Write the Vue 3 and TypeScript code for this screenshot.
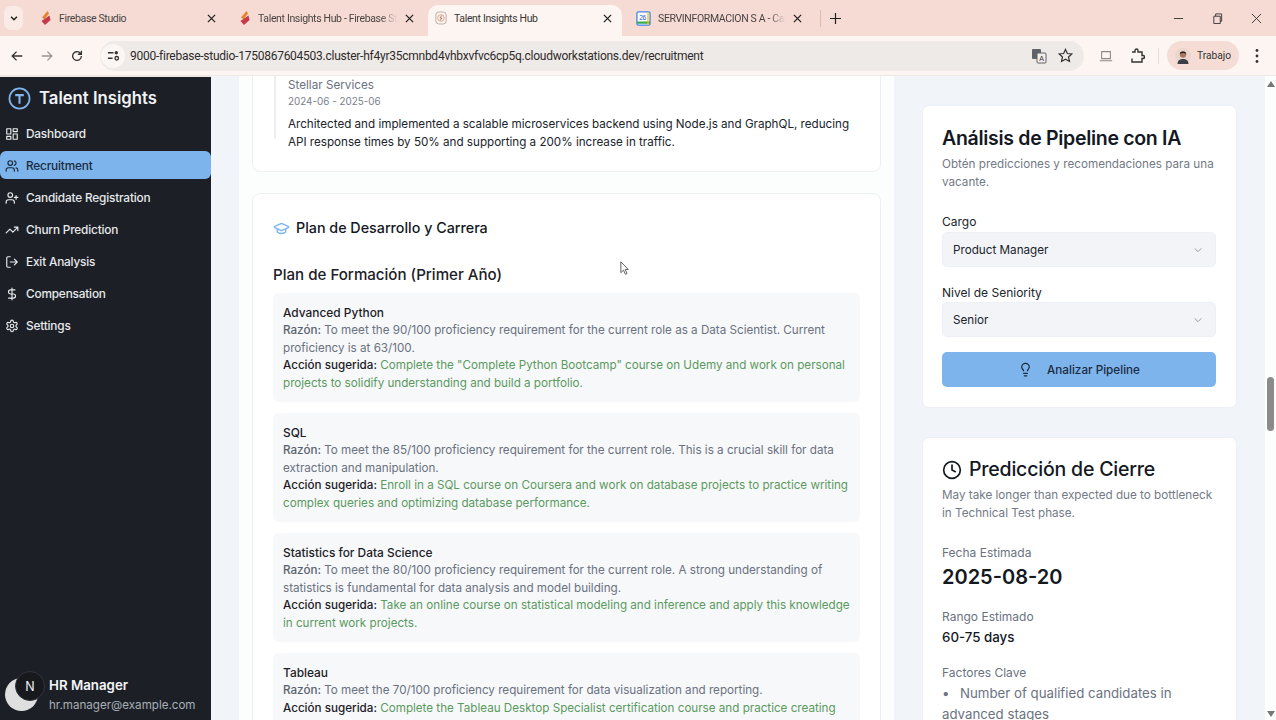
<script setup lang="ts">
interface NavItem { label: string; icon: string; active?: boolean }
interface Tab { title: string; kind: 'firebase' | 'hub' | 'cal'; active?: boolean; fade?: boolean }
interface Course { name: string; reason: string; action: string }

const tabs: Tab[] = [
  { title: 'Firebase Studio', kind: 'firebase' },
  { title: 'Talent Insights Hub - Firebase Studio', kind: 'firebase', fade: true },
  { title: 'Talent Insights Hub', kind: 'hub', active: true },
  { title: 'SERVINFORMACION S A - Calendar', kind: 'cal', fade: true },
]

const nav: NavItem[] = [
  { label: 'Dashboard', icon: 'M3 3h7v9H3zM14 3h7v5h-7zM14 12h7v9h-7zM3 16h7v5H3z' },
  { label: 'Recruitment', active: true, icon: 'M16 21v-2a4 4 0 0 0-4-4H6a4 4 0 0 0-4 4v2M13 7a4 4 0 1 1-8 0 4 4 0 0 1 8 0M22 21v-2a4 4 0 0 0-3-3.87M16 3.13a4 4 0 0 1 0 7.75' },
  { label: 'Candidate Registration', icon: 'M16 21v-2a4 4 0 0 0-4-4H6a4 4 0 0 0-4 4v2M13 7a4 4 0 1 1-8 0 4 4 0 0 1 8 0M19 8v6M22 11h-6' },
  { label: 'Churn Prediction', icon: 'M22 7l-8.5 8.5-5-5L2 17M16 7h6v6' },
  { label: 'Exit Analysis', icon: 'M9 21H5a2 2 0 0 1-2-2V5a2 2 0 0 1 2-2h4M16 17l5-5-5-5M21 12H9' },
  { label: 'Compensation', icon: 'M12 2v20M17 5H9.5a3.5 3.5 0 0 0 0 7h5a3.5 3.5 0 0 1 0 7H6' },
  { label: 'Settings', icon: 'M12.2 2h-.4a2 2 0 0 0-2 2v.2a2 2 0 0 1-1 1.7l-.4.3a2 2 0 0 1-2 0l-.2-.1a2 2 0 0 0-2.7.7l-.2.4a2 2 0 0 0 .7 2.7l.2.1a2 2 0 0 1 1 1.7v.5a2 2 0 0 1-1 1.7l-.2.1a2 2 0 0 0-.7 2.7l.2.4a2 2 0 0 0 2.7.7l.2-.1a2 2 0 0 1 2 0l.4.3a2 2 0 0 1 1 1.7v.2a2 2 0 0 0 2 2h.4a2 2 0 0 0 2-2v-.2a2 2 0 0 1 1-1.7l.4-.3a2 2 0 0 1 2 0l.2.1a2 2 0 0 0 2.7-.7l.2-.4a2 2 0 0 0-.7-2.7l-.2-.1a2 2 0 0 1-1-1.7v-.5a2 2 0 0 1 1-1.7l.2-.1a2 2 0 0 0 .7-2.7l-.2-.4a2 2 0 0 0-2.7-.7l-.2.1a2 2 0 0 1-2 0l-.4-.3a2 2 0 0 1-1-1.7V4a2 2 0 0 0-2-2zM15 12a3 3 0 1 1-6 0 3 3 0 0 1 6 0' },
]

const courses: Course[] = [
  {
    name: 'Advanced Python',
    reason: 'To meet the 90/100 proficiency requirement for the current role as a Data Scientist. Current proficiency is at 63/100.',
    action: 'Complete the "Complete Python Bootcamp" course on Udemy and work on personal projects to solidify understanding and build a portfolio.',
  },
  {
    name: 'SQL',
    reason: 'To meet the 85/100 proficiency requirement for the current role. This is a crucial skill for data extraction and manipulation.',
    action: 'Enroll in a SQL course on Coursera and work on database projects to practice writing complex queries and optimizing database performance.',
  },
  {
    name: 'Statistics for Data Science',
    reason: 'To meet the 80/100 proficiency requirement for the current role. A strong understanding of statistics is fundamental for data analysis and model building.',
    action: 'Take an online course on statistical modeling and inference and apply this knowledge in current work projects.',
  },
  {
    name: 'Tableau',
    reason: 'To meet the 70/100 proficiency requirement for data visualization and reporting.',
    action: 'Complete the Tableau Desktop Specialist certification course and practice creating',
  },
]
</script>

<template>
  <div class="window">
    <header class="tabstrip">
      <button class="tab-menu">
        <svg viewBox="0 0 12 12" width="10" height="10"><path d="M2.5 4.5 6 8l3.5-3.5" fill="none" stroke="#1f1f1f" stroke-width="1.8" /></svg>
      </button>
      <div
        v-for="tab in tabs"
        :key="tab.title"
        :class="['tab', { 'is-active': tab.active }]"
      >
        <svg v-if="tab.kind === 'firebase'" class="favicon" viewBox="0 0 12 16">
          <path d="M7.500 1 2 7.500l2.500 1.700L9 3.500z" fill="#e8832d" />
          <path d="M9.500 5.500 1.500 11l3.500 4 5.500-5z" fill="#c43a48" />
        </svg>
        <svg v-else-if="tab.kind === 'hub'" class="favicon" viewBox="0 0 14 16">
          <rect x="1" y="1" width="12" height="14" rx="3.500" fill="#fbf3ef" stroke="#b8a49b" />
          <circle cx="7" cy="8" r="3.800" fill="none" stroke="#d39a84" stroke-width=".9" />
          <path d="M8 5 5.800 8h2.400L6 11" fill="none" stroke="#c46a4c" stroke-width="1" />
        </svg>
        <svg v-else class="favicon" viewBox="0 0 16 16">
          <rect x="1" y="1" width="14" height="14" rx="1.500" fill="#fff" stroke="#4285f4" stroke-width="1.400" />
          <path d="M1 12.400h14" stroke="#34a853" stroke-width="2.400" />
          <path d="M12.800 1v14" stroke="#fbbc04" stroke-width="1.400" />
          <text x="7" y="10" font-size="7" text-anchor="middle" fill="#1a56c4" font-family="Liberation Sans, sans-serif">26</text>
        </svg>
        <span :class="['tab-title', { 'is-fade': tab.fade }]">{{ tab.title }}</span>
        <svg class="tab-close" viewBox="0 0 10 10" width="9" height="9"><path d="M1 1l8 8M9 1 1 9" stroke="#1f1f1f" stroke-width="1.400" /></svg>
      </div>
      <span class="tab-sep"></span>
      <svg class="tab-plus" viewBox="0 0 12 12" width="11" height="11"><path d="M6 0v12M0 6h12" stroke="#1f1f1f" stroke-width="1.300" /></svg>
      <div class="window-btns">
        <svg viewBox="0 0 12 12" width="11" height="11"><path d="M1 6h10" stroke="#333" stroke-width="1" /></svg>
        <svg viewBox="0 0 12 12" width="11" height="11"><path d="M2 3.500h7v8H2zM4 3.500V1h6.500v8H9" fill="none" stroke="#333" stroke-width="1" /></svg>
        <svg viewBox="0 0 12 12" width="11" height="11"><path d="M1 1l10 10M11 1 1 11" stroke="#333" stroke-width="1" /></svg>
      </div>
    </header>

    <div class="toolbar">
      <svg class="tool" viewBox="0 0 16 16" width="14" height="14"><path d="M14 8H2.500M7.500 3 2.500 8l5 5" fill="none" stroke="#333" stroke-width="1.500" /></svg>
      <svg class="tool" viewBox="0 0 16 16" width="14" height="14"><path d="M2 8h11.500M8.500 3l5 5-5 5" fill="none" stroke="#9a9492" stroke-width="1.500" /></svg>
      <svg class="tool" viewBox="0 0 16 16" width="14" height="14"><path d="M13 8a5 5 0 1 1-1.500-3.500L13 6M13 2v4H9" fill="none" stroke="#333" stroke-width="1.500" /></svg>
      <div class="omnibox">
        <span class="site-chip">
          <svg viewBox="0 0 14 14" width="13" height="13"><path d="M1 4h6M1 10h5" stroke="#333" stroke-width="1.500" /><circle cx="10" cy="4" r="1.800" fill="#333" /><circle cx="10.500" cy="10" r="1.900" fill="none" stroke="#333" stroke-width="1.400" /></svg>
        </span>
        <span class="url">9000-firebase-studio-1750867604503.cluster-hf4yr35cmnbd4vhbxvfvc6cp5q.cloudworkstations.dev/recruitment</span>
        <svg class="omni-icon" viewBox="0 0 16 16" width="16" height="16">
          <rect x="1" y="1" width="9" height="10" rx="1" fill="#5f6368" />
          <rect x="6" y="5" width="9" height="10" rx="1" fill="#f2eeec" stroke="#5f6368" />
          <text x="10.500" y="13" font-size="7" text-anchor="middle" fill="#333" font-family="Liberation Sans, sans-serif">A</text>
        </svg>
        <svg class="omni-icon" viewBox="0 0 16 16" width="15" height="15"><path d="M8 1.500l2 4.400 4.700.5-3.500 3.200 1 4.700L8 11.900l-4.200 2.400 1-4.700L1.300 6.400 6 5.900z" fill="none" stroke="#333" stroke-width="1.300" /></svg>
      </div>
      <svg class="tool-right" viewBox="0 0 16 16" width="14" height="14"><path d="M3 3h10v8H3zM1 13.500h14" fill="none" stroke="#8a8684" stroke-width="1.200" /></svg>
      <svg class="tool-right" viewBox="0 0 16 16" width="16" height="16"><path d="M3 4h3V2.500a1.500 1.500 0 0 1 3 0V4h4v3.500h1a1.500 1.500 0 0 1 0 3h-1V14H3v-3.500" fill="none" stroke="#333" stroke-width="1.400" /></svg>
      <span class="tool-sep"></span>
      <div class="profile">
        <svg viewBox="0 0 16 16" width="16" height="16">
          <circle cx="8" cy="8" r="8" fill="#e9d6cf" />
          <path d="M2.500 16c0-3.600 2.400-5 5.500-5s5.500 1.400 5.500 5z" fill="#3a3f44" />
          <circle cx="8" cy="6.500" r="3.200" fill="#a8795f" />
          <path d="M4.800 6C5 2.800 11 2.800 11.200 6 9 4.600 7 4.600 4.800 6" fill="#26211f" />
        </svg>
        <span>Trabajo</span>
      </div>
      <svg class="dots" viewBox="0 0 4 16" width="4" height="16"><circle cx="2" cy="2.500" r="1.400" fill="#333" /><circle cx="2" cy="8" r="1.400" fill="#333" /><circle cx="2" cy="13.500" r="1.400" fill="#333" /></svg>
    </div>

    <div class="app">
      <aside class="sidebar">
        <div class="brand">
          <svg viewBox="0 0 24 24" width="23" height="23" fill="none" stroke="#7fb5ec" stroke-width="1.800">
            <circle cx="12" cy="12" r="10.500" />
            <path d="M7.500 8.500h9M12 8.500v9" stroke-width="2.200" />
          </svg>
          <span>Talent Insights</span>
        </div>
        <nav class="nav">
          <a v-for="item in nav" :key="item.label" :class="['nav-item', { 'is-active': item.active }]">
            <svg viewBox="0 0 24 24" width="14" height="14" fill="none" stroke="currentColor" stroke-width="2" stroke-linecap="round" stroke-linejoin="round">
              <path :d="item.icon" />
            </svg>
            <span>{{ item.label }}</span>
          </a>
        </nav>
        <div class="user">
          <div class="avatar">
            <span class="moon"></span>
            <span class="n-badge">N</span>
          </div>
          <div class="user-text">
            <strong>HR Manager</strong>
            <small>hr.manager@example.com</small>
          </div>
        </div>
      </aside>

      <main class="content">
        <div class="gutter"></div>
        <section class="center">
          <div class="card card-exp">
            <div class="exp">
              <div class="exp-company">Stellar Services</div>
              <div class="exp-dates">2024-06 - 2025-06</div>
              <p>Architected and implemented a scalable microservices backend using Node.js and GraphQL, reducing API response times by 50% and supporting a 200% increase in traffic.</p>
            </div>
          </div>

          <div class="card card-plan">
            <h3 class="plan-title">
              <svg viewBox="0 0 24 24" width="17" height="17" fill="none" stroke="#7fb5ec" stroke-width="2" stroke-linecap="round" stroke-linejoin="round">
                <path d="M21.400 10.900a1 1 0 0 0 0-1.800L12.800 5.200a2 2 0 0 0-1.700 0L2.600 9.100a1 1 0 0 0 0 1.800l8.500 3.900a2 2 0 0 0 1.700 0zM6 12.500V16c0 1.700 2.700 3 6 3s6-1.300 6-3v-3.500" />
              </svg>
              Plan de Desarrollo y Carrera
            </h3>
            <h4 class="plan-sub">Plan de Formación (Primer Año)</h4>
            <div class="courses">
              <article v-for="course in courses" :key="course.name" class="course">
                <div class="course-name">{{ course.name }}</div>
                <p class="course-reason"><b>Razón:</b> {{ course.reason }}</p>
                <p class="course-action"><b>Acción sugerida:</b> <span>{{ course.action }}</span></p>
              </article>
            </div>
          </div>
          <svg class="cursor" viewBox="0 0 12 18" width="10" height="15"><path d="M1 1v13l3.200-3 2.300 5 2-1-2.300-4.800H10z" fill="#fff" stroke="#444" stroke-width="1" /></svg>
        </section>

        <aside class="side">
          <div class="panel panel-ia">
            <h2>Análisis de Pipeline con IA</h2>
            <p class="panel-desc">Obtén predicciones y recomendaciones para una vacante.</p>
            <label class="field-label">Cargo</label>
            <div class="select">
              <span>Product Manager</span>
              <svg viewBox="0 0 12 12" width="10" height="10"><path d="M2 4l4 4 4-4" fill="none" stroke="#8b9099" stroke-width="1.100" /></svg>
            </div>
            <label class="field-label second">Nivel de Seniority</label>
            <div class="select select-second">
              <span>Senior</span>
              <svg viewBox="0 0 12 12" width="10" height="10"><path d="M2 4l4 4 4-4" fill="none" stroke="#8b9099" stroke-width="1.100" /></svg>
            </div>
            <button class="analyze">
              <svg viewBox="0 0 24 24" width="15" height="15" fill="none" stroke="#1b2a3d" stroke-width="2" stroke-linecap="round" stroke-linejoin="round">
                <path d="M15 14c.2-1 .7-1.700 1.500-2.500A5.900 5.900 0 0 0 18 8 6 6 0 0 0 6 8c0 1 .2 2.200 1.500 3.500.7.700 1.300 1.500 1.500 2.500M9 18h6M10 22h4" />
              </svg>
              Analizar Pipeline
            </button>
          </div>

          <div class="panel panel-close">
            <h2 class="with-icon">
              <svg viewBox="0 0 24 24" width="20" height="20" fill="none" stroke="#14181f" stroke-width="2" stroke-linecap="round" stroke-linejoin="round">
                <circle cx="12" cy="12" r="10" /><path d="M12 6v6l4 2" />
              </svg>
              Predicción de Cierre
            </h2>
            <p class="panel-desc">May take longer than expected due to bottleneck in Technical Test phase.</p>
            <div class="stat-label first">Fecha Estimada</div>
            <div class="stat-date">2025-08-20</div>
            <div class="stat-label">Rango Estimado</div>
            <div class="stat-range">60-75 days</div>
            <div class="stat-label third">Factores Clave</div>
            <p class="factor"><span class="bullet">•</span>Number of qualified candidates in advanced stages</p>
          </div>
        </aside>

        <div class="scrollbar">
          <svg viewBox="0 0 8 6" width="8" height="6"><path d="M4 0l4 6H0z" fill="#777" /></svg>
          <span class="thumb"></span>
          <svg viewBox="0 0 8 6" width="8" height="6"><path d="M0 0h8L4 6z" fill="#777" /></svg>
        </div>
      </main>
    </div>
  </div>
</template>

<style>
html, body { margin: 0; overflow: hidden; }
</style>

<style scoped>
.window { width: 1276px; height: 720px; display: flex; flex-direction: column; overflow: hidden; font-family: Inter, "Liberation Sans", sans-serif; color: #14181f; }

.tabstrip { flex: 0 0 36px; display: flex; align-items: center; background: #f6dbd4; font-family: Roboto, "Liberation Sans", sans-serif; }
.tab-menu { width: 19px; height: 24px; margin: 0 5px 0 4px; padding: 0; border: 0; border-radius: 7px; background: #faebe6; display: flex; align-items: center; justify-content: center; flex: none; }
.tab { width: 200px; height: 36px; flex: none; display: flex; align-items: center; box-sizing: border-box; padding: 0 12px 0 12px; font-size: 10.500px; letter-spacing: -0.35px; color: #4a4442; }
.tab:nth-of-type(2) { padding: 0 14px 0 11px; }
.tab.is-active { width: 194px; height: 31px; align-self: flex-end; background: #fcf5f2; border-radius: 10px 10px 0 0; color: #3a3534; padding: 0 10px 5px 7px; }
.tab:nth-of-type(4) { width: 198px; padding-left: 14px; padding-right: 18px; }
.favicon { width: 12px; height: 16px; flex: none; margin-right: 7px; }
.tab:nth-of-type(4) .favicon { width: 15px; height: 15px; }
.tab-title { flex: 1; min-width: 0; white-space: nowrap; overflow: hidden; }
.tab-title.is-fade { -webkit-mask-image: linear-gradient(90deg, #000 88%, transparent 100%); mask-image: linear-gradient(90deg, #000 88%, transparent 100%); }
.tab-close { flex: none; margin-left: 8px; }
.tab-sep { width: 1px; height: 17px; background: #dfb9af; margin: 0 9px 0 0; flex: none; }
.tab-plus { flex: none; }
.window-btns { margin-left: auto; margin-right: 14px; display: flex; gap: 28px; }

.toolbar { flex: 0 0 40px; box-sizing: border-box; display: flex; align-items: center; background: #fcf5f2; padding: 0 0 0 10px; border-bottom: 1px solid #efe9e6; }
.tool { margin-right: 16px; flex: none; }
.omnibox { width: 984px; flex: none; height: 30px; margin-right: 15px; background: #eeeae8; border-radius: 15px; display: flex; align-items: center; font-family: Roboto, "Liberation Sans", sans-serif; font-size: 12px; letter-spacing: -0.25px; color: #2e2b2a; }
.site-chip { width: 24px; height: 24px; margin: 0 5px 0 1px; border-radius: 50%; background: #fbf6f3; display: flex; align-items: center; justify-content: center; flex: none; }
.url { flex: 1; white-space: nowrap; overflow: hidden; }
.omni-icon { flex: none; margin-right: 11px; }
.tool-right { flex: none; margin-right: 16px; }
.tool-sep { width: 1px; height: 16px; background: #ecdcd6; margin: 0 8px 0 -3px; flex: none; }
.profile { width: 72px; height: 29px; box-sizing: border-box; border-radius: 15px; background: #f5ddd6; display: flex; align-items: center; gap: 6px; padding-left: 8px; font-family: Roboto, "Liberation Sans", sans-serif; font-size: 10.200px; color: #333; flex: none; }
.dots { margin-left: 16px; flex: none; }

.app { flex: 1; min-height: 0; display: flex; }
.sidebar { flex: 0 0 211px; box-sizing: border-box; border-top: 1px solid #efe9e6; background: #1c2026; color: #f2f4f7; display: flex; flex-direction: column; }
.brand { display: flex; align-items: center; gap: 8px; height: 43px; box-sizing: border-box; padding: 0 0 1px 8px; font-size: 16.700px; font-weight: 600; flex: none; }
.nav { display: flex; flex-direction: column; margin-top: -1px; }
.nav-item { display: flex; align-items: center; gap: 7px; height: 28px; box-sizing: border-box; margin-bottom: 4px; padding: 1px 0 0 5px; font-size: 11.800px; letter-spacing: -0.17px; font-weight: 500; color: #e7e9ec; border-radius: 6px; }
.nav-item.is-active { background: #7db4ec; color: #1b2a3d; }
.user { margin-top: auto; height: 51px; display: flex; align-items: center; padding-left: 5px; gap: 3px; box-sizing: border-box; }
.avatar { position: relative; width: 41px; height: 41px; flex: none; margin-top: -6px; }
.moon { position: absolute; left: 0; top: 7px; width: 33px; height: 33px; border-radius: 50%; background: #dfdfdf; }
.n-badge { position: absolute; left: 10px; top: 0; width: 30px; height: 30px; box-sizing: border-box; border: 1px solid #30343a; border-radius: 50%; background: #17191d; color: #f2f2f2; font-size: 12.500px; display: flex; align-items: center; justify-content: center; }
.user-text { display: flex; flex-direction: column; gap: 3px; }
.user-text strong { font-size: 13.300px; font-weight: 600; color: #f5f6f8; line-height: 17px; }
.user-text small { font-size: 11.600px; color: #a9afb8; line-height: 16px; }

.content { flex: 1; min-width: 0; display: flex; background: #f1f5f9; overflow: hidden; }
.gutter { flex: 0 0 28px; }
.center { flex: 0 0 655px; box-sizing: border-box; background: #fcfdfd; padding: 0 13px; position: relative; }
.card { background: #fff; border: 1px solid #eeeff2; border-radius: 8px; box-sizing: border-box; width: 629px; }
.card-exp { height: 96px; border-top: 0; border-radius: 0 0 8px 8px; padding: 0 20px 0 21px; }
.exp { border-left: 2px solid #eceef1; padding-left: 12px; height: 63px; }
.exp-company { font-size: 11.700px; line-height: 18px; color: #6a7280; }
.exp-dates { font-size: 9.900px; line-height: 14px; color: #7a818c; }
.exp p { margin: 7px 0 0; font-size: 11.650px; line-height: 18px; color: #20242b; }
.card-plan { margin-top: 21px; padding: 24px 20px 0; height: 540px; overflow: hidden; }
.plan-title { display: flex; align-items: center; gap: 6px; margin: 0; font-size: 14.300px; line-height: 20px; font-weight: 500; color: #14181f; }
.plan-sub { margin: 27px 0 0; font-size: 15.100px; line-height: 20px; font-weight: 500; color: #1c2027; }
.courses { margin-top: 8px; display: flex; flex-direction: column; gap: 11px; }
.course { background: #f7f8fa; border-radius: 6px; padding: 11px 10px 0; height: 109px; box-sizing: border-box; font-size: 11.650px; line-height: 17.750px; }
.course-name { font-size: 11.900px; font-weight: 500; color: #1c2027; }
.course p { margin: 0; }
.course-reason { color: #6a7280; }
.course-reason b { font-weight: 500; color: #5a616d; }
.course-action b { font-weight: 500; color: #1c2027; }
.course-action span { color: #5b9a5f; }
.cursor { position: absolute; left: 381px; top: 185px; }

.side { flex: 0 0 370px; box-sizing: border-box; padding: 29px 28px 0; display: flex; flex-direction: column; gap: 29px; }
.panel { width: 315px; box-sizing: border-box; background: #fff; border: 1px solid #eceff3; border-radius: 7px; padding: 20px 20px 0 19px; flex: none; }
.panel-ia { height: 303px; }
.panel h2 { margin: 0; font-size: 19.500px; line-height: 25px; font-weight: 600; color: #14181f; letter-spacing: -0.3px; }
.panel h2.with-icon { display: flex; align-items: center; gap: 7px; font-weight: 500; letter-spacing: -0.2px; }
.panel-desc { margin: 4px 0 0; font-size: 11.700px; line-height: 18px; color: #737a86; }
.field-label { display: block; margin-top: 23px; font-size: 12px; line-height: 15px; color: #20242b; }
.field-label.second { margin-top: 18px; }
.select { margin-top: 3px; height: 35px; box-sizing: border-box; padding: 0 12px 0 10px; background: #f2f4f8; border: 1px solid #edf0f4; border-radius: 5px; display: flex; align-items: center; justify-content: space-between; font-size: 11.700px; color: #20242b; }
.select-second { margin-top: 2px; }
.analyze { margin-top: 15px; width: 100%; height: 35px; border: 0; border-radius: 5px; background: #7db4ec; display: flex; align-items: center; justify-content: center; gap: 14px; font-family: inherit; font-size: 11.700px; font-weight: 500; color: #1b2a3d; }
.panel-close { height: 400px; padding-top: 19px; }
.panel-close .panel-desc { margin-top: 4px; }
.stat-label { margin-top: 16px; font-size: 12px; line-height: 17px; color: #6a7280; }
.stat-label.first { margin-top: 22px; }
.stat-label.third { margin-top: 17px; }
.stat-date { font-size: 20px; line-height: 30px; font-weight: 600; color: #14181f; margin-top: 1px; }
.stat-range { font-size: 13.300px; line-height: 20px; font-weight: 500; color: #14181f; margin-top: 2px; }
.factor { margin: 2px 0 0; font-size: 13.250px; line-height: 20.500px; color: #6a7280; }
.bullet { display: inline-block; width: 18px; }

.scrollbar { flex: 0 0 12px; background: #fcfdfd; display: flex; flex-direction: column; align-items: center; justify-content: space-between; padding: 5px 0 3px; box-sizing: border-box; position: relative; }
.thumb { position: absolute; left: 2px; top: 301px; width: 7px; height: 54px; background: #8b8b8b; border-radius: 4px; }
</style>
